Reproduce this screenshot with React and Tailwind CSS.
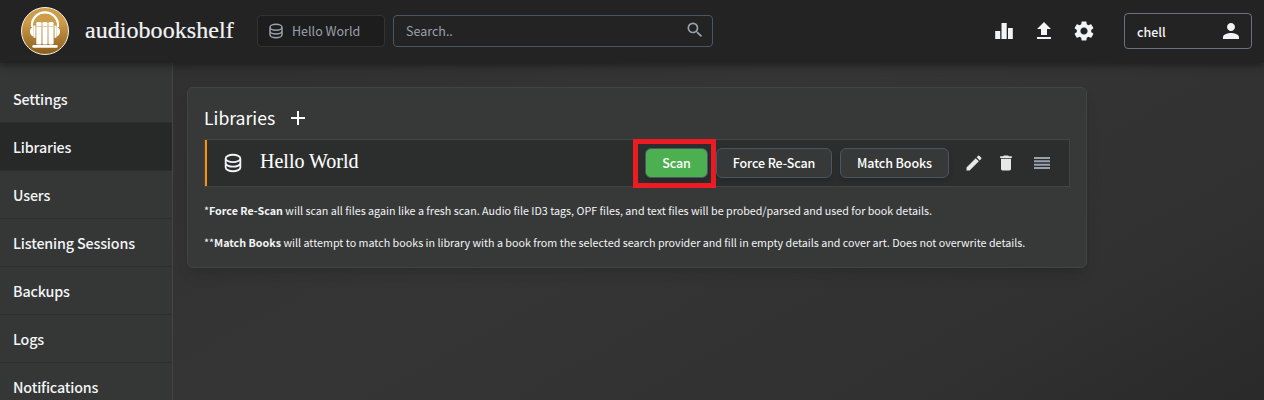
import React from "react";
import { MdUpload, MdSettings, MdPerson, MdEdit, MdDelete, MdAdd, MdSearch } from "react-icons/md";

function DatabaseIcon({ className }) {
  return (
    <svg viewBox="0 0 24 24" fill="none" stroke="currentColor" strokeWidth="2" strokeLinecap="round" strokeLinejoin="round" className={className}>
      <path d="M4 7v10c0 2.21 3.582 4 8 4s8-1.79 8-4V7M4 7c0 2.21 3.582 4 8 4s8-1.79 8-4M4 7c0-2.21 3.582-4 8-4s8 1.79 8 4m0 5c0 2.21-3.582 4-8 4s-8-1.79-8-4" />
    </svg>
  );
}

function StatsIcon() {
  return (
    <svg viewBox="0 0 24 24" fill="currentColor" className="size-6">
      <path d="M3.200 12h5v8h-5zM9.500 4h5.200v16H9.500zM16 9h4.800v11H16z" />
    </svg>
  );
}

function DragIcon({ className }) {
  return (
    <svg viewBox="0 0 16 12" fill="currentColor" className={className}>
      <path d="M0 0h16v1.900H0zM0 3.370h16v1.900H0zM0 6.740h16v1.900H0zM0 10.100h16v1.900H0z" />
    </svg>
  );
}

function Logo() {
  return (
    <svg viewBox="0 0 48 48" className="size-12 shrink-0">
      <defs>
        <linearGradient id="gold" x1="0" y1="0" x2="0" y2="1">
          <stop offset="0.3" stopColor="#cd9d49" />
          <stop offset="1" stopColor="#8a5c1a" />
        </linearGradient>
      </defs>
      <circle cx="24" cy="24" r="23.5" fill="url(#gold)" stroke="#f6f0e6" strokeWidth="1" />
      <path d="M11 20v-2a13 12.600 0 0 1 26 0v2" fill="none" stroke="#fff" strokeWidth="2.200" />
      <path d="M12.600 18.600h1.900v12.200h-1.900zM33.500 18.600h1.900v12.200h-1.900z" fill="#fff" />
      <path d="M12.600 19.600c-2 .6-3.600 2.200-3.600 5s1.600 4.600 3.600 5.200zM35.400 19.600c2 .6 3.600 2.200 3.600 5s-1.600 4.600-3.600 5.200z" fill="#fff" />
      <rect x="15.300" y="15" width="5.200" height="22.500" rx="1.300" fill="#fff" />
      <rect x="21.400" y="15" width="5.200" height="22.500" rx="1.300" fill="#fff" />
      <rect x="27.400" y="15" width="5.200" height="22.500" rx="1.300" fill="#fff" />
      <path d="M15.300 19.500h5.200M21.400 19.500h5.200M27.400 19.500h5.200" stroke="#d9b97f" strokeWidth="0.700" />
      <rect x="11.300" y="38" width="25.400" height="2.800" rx="1.300" fill="#fff" />
    </svg>
  );
}

const navItems = ["Settings", "Libraries", "Users", "Listening Sessions", "Backups", "Logs", "Notifications"];

function Header() {
  return (
    <header className="relative z-10 flex h-[63px] shrink-0 items-center bg-[#232323] pr-3 pb-px pl-[21px] shadow-[0_2px_8px_#111111aa]">
      <Logo />
      <h1 className="ml-4 w-[172px] pb-0.5 font-['Liberation_Serif',serif] text-[24px] leading-8 tracking-[0.05px] whitespace-nowrap [-webkit-text-stroke:0.2px]">audiobookshelf</h1>
      <div className="flex h-8 w-32 shrink-0 items-center rounded-sm border border-[#333] bg-[#1d1d1d] pl-[9px] text-gray-400">
        <DatabaseIcon className="size-[18px]" />
        <span className="ml-[7px] text-[12.5px]">Hello World</span>
      </div>
      <div className="ml-2 flex h-8 w-80 shrink-0 items-center justify-between rounded-sm border border-gray-600 bg-[#232323] pr-[7px] pl-3 text-[12.5px] text-gray-400">
        <span>Search..</span>
        <MdSearch className="mb-0.5 size-5" />
      </div>
      <div className="ml-auto flex items-center gap-4">
        <StatsIcon />
        <MdUpload className="size-6" />
        <MdSettings className="size-6" />
      </div>
      <div className="ml-7 flex h-9 w-32 items-center justify-between rounded-sm border border-gray-500 pr-2 pl-3">
        <span className="pt-0.5 text-[12.5px] font-medium">chell</span>
        <MdPerson className="size-6" />
      </div>
    </header>
  );
}

function Sidebar() {
  return (
    <nav className="w-[173px] shrink-0 border-r border-[#454545] bg-[#353736] pt-3">
      {navItems.map((item) => (
        <div
          key={item}
          className={`flex h-12 items-center border-b border-[#2d2f2e] pl-[13px] text-[14.3px] font-medium tracking-[-0.16px] whitespace-nowrap ${item === "Libraries" ? "bg-[#272928]" : ""}`}
        >
          {item}
        </div>
      ))}
    </nav>
  );
}

function Button({ className, children }) {
  return (
    <button className={`h-[30px] rounded-md border border-gray-600 text-[12.5px] font-medium tracking-[-0.1px] whitespace-nowrap text-white shadow-md ${className}`}>{children}</button>
  );
}

function LibraryRow() {
  return (
    <div className="flex h-12 items-center border border-[#434544] bg-[#2c2e2d]">
      <div className="h-full w-0.5 bg-[#ff9100]" />
      <DatabaseIcon className="ml-[15px] size-[22px]" />
      <span className="ml-4 flex-1 pb-[5px] font-['Liberation_Serif',serif] text-[20px] text-white [-webkit-text-stroke:0.1px]">Hello World</span>
      <div className="flex h-[49px] w-[83px] items-center border-[5px] border-[#ed1c24] pl-[7px]">
        <Button className="w-[63px] bg-[#4caf50]">Scan</Button>
      </div>
      <Button className="w-[116px] bg-[#373838]">Force Re-Scan</Button>
      <Button className="ml-2 w-[109px] bg-[#373838]">Match Books</Button>
      <MdEdit className="ml-[15px] size-5 text-gray-200" />
      <MdDelete className="ml-3 size-5 text-gray-200" />
      <DragIcon className="mr-[19px] ml-[18px] h-3 w-4 text-gray-400" />
    </div>
  );
}

export default function App() {
  return (
    <div className="flex h-[400px] w-[1264px] flex-col overflow-hidden bg-[linear-gradient(to_right_bottom,#2e2e2e,#303030,#313131,#333333,#353535,#343434,#323232,#313131,#2c2c2c,#282828,#242424,#202020)] bg-size-[1264px_700px] font-['Noto_Sans_CJK_SC',sans-serif] text-gray-100">
      <Header />
      <div className="flex min-h-0 flex-1">
        <Sidebar />
        <main className="flex-1 pt-6 pl-3.5">
          <section className="h-[181px] w-[900px] rounded-md border border-[#424444] bg-[#373938] px-4 pt-[17px] shadow-lg">
            <div className="flex h-[34px] items-center pb-[9px] text-white">
              <h2 className="text-[17.6px] leading-7">Libraries</h2>
              <MdAdd className="ml-[11px] size-6" />
            </div>
            <LibraryRow />
            <p className="mt-4 text-[10.72px] leading-4 whitespace-nowrap">
              *<b className="font-bold">Force Re-Scan</b> will scan all files again like a fresh scan. Audio file ID3 tags, OPF files, and text files will be probed/parsed and used for book details.
            </p>
            <p className="mt-4 text-[10.72px] leading-4 whitespace-nowrap">
              **<b className="font-bold">Match Books</b> will attempt to match books in library with a book from the selected search provider and fill in empty details and cover art. Does not overwrite details.
            </p>
          </section>
        </main>
      </div>
    </div>
  );
}
